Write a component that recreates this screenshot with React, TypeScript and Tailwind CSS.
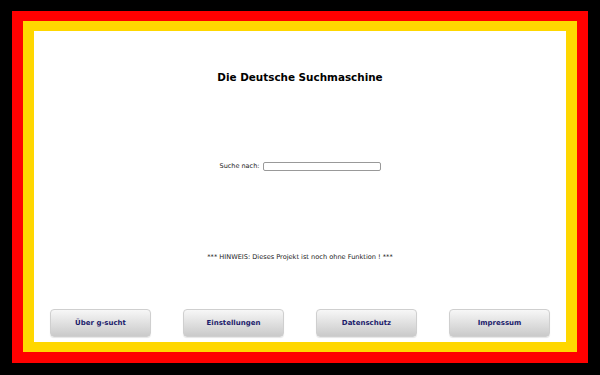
export default function App() {
  const font = { fontFamily: '"DejaVu Sans", sans-serif' };
  const buttons = ["Über g-sucht", "Einstellungen", "Datenschutz", "Impressum"];
  return (
    <div className="w-[600px] h-[375px] bg-black pt-[11px] px-[12px] pb-[12px]" style={font}>
      <div className="h-full bg-[#ff0000] pt-[10px] px-[11px] pb-[11px]">
        <div className="h-full bg-[#ffd700] pt-[10px] px-[11px] pb-[10px]">
          <div className="h-full bg-white flex flex-col">
            <h1 className="mt-[38px] text-center text-[10.4px] leading-[16px] font-bold text-black">
              Die Deutsche Suchmaschine
            </h1>
            <div className="mt-[77px] flex items-center justify-center gap-[3px] h-[9px]">
              <span className="text-[6.5px] leading-[9px] text-[#222]">Suche nach:</span>
              <input
                type="text"
                className="w-[118px] h-[9px] border border-[#999] rounded-[2px] bg-white outline-none"
              />
            </div>
            <p className="mt-[81px] text-center text-[6.6px] leading-[10px] text-[#222]">
              *** HINWEIS: Dieses Projekt ist noch ohne Funktion ! ***
            </p>
            <div className="mt-[47px] grid grid-cols-4">
              {buttons.map((b) => (
                <div key={b} className="flex justify-center">
                  <button className="w-[101px] h-[28px] rounded-[4px] border border-[#cfcfcf] bg-gradient-to-b from-[#f7f7f7] to-[#cacaca] text-[7px] font-bold text-[#1c1c6b] shadow-[0_1px_1px_rgba(0,0,0,0.1)]">
                    {b}
                  </button>
                </div>
              ))}
            </div>
          </div>
        </div>
      </div>
    </div>
  );
}
